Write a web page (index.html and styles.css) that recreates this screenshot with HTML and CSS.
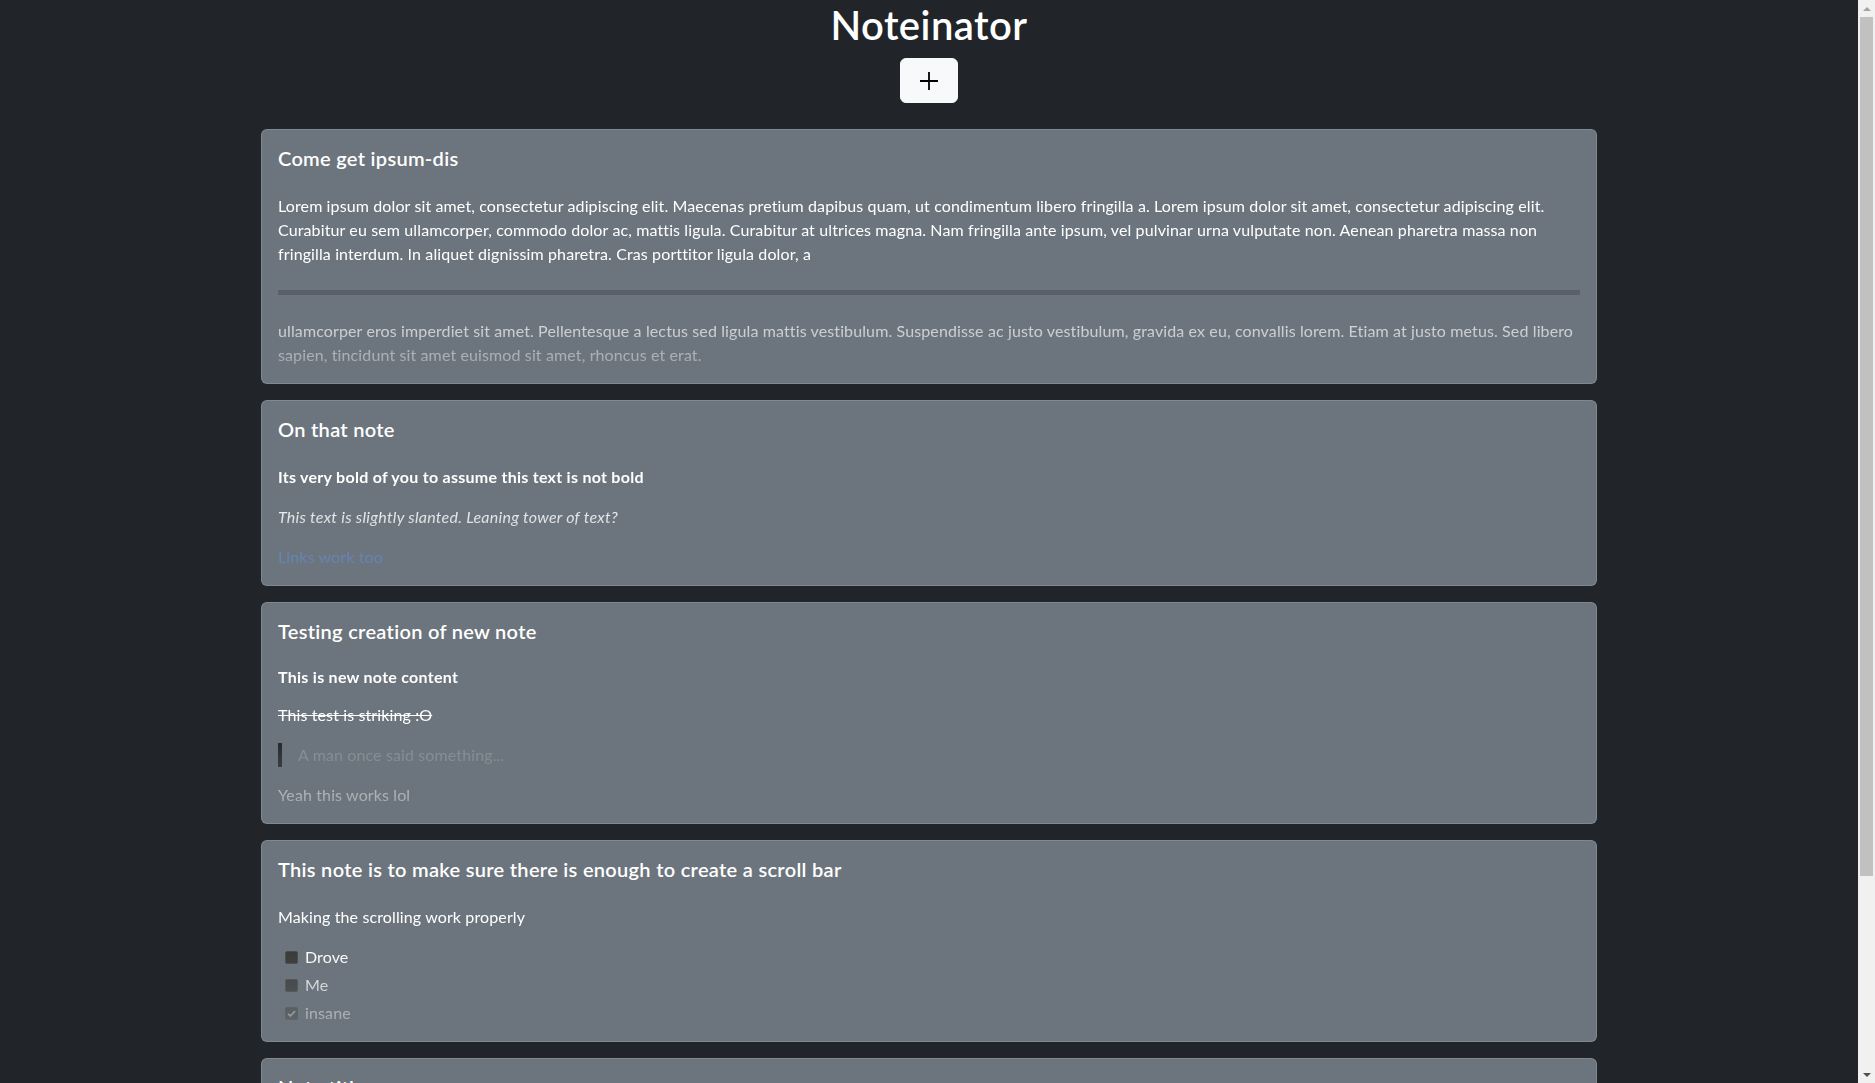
FILE: index.html
```html
<!DOCTYPE html>
<html lang="en">
<head>
<meta charset="utf-8">
<title>Noteinator</title>
<link rel="stylesheet" href="styles.css">
</head>
<body>
<div class="app">
  <div class="page">
    <header class="header">
      <h1 class="brand">Noteinator</h1>
      <button class="btn-add" type="button" aria-label="Add note">
        <svg width="20" height="20" viewBox="0 0 20 20" aria-hidden="true">
          <path d="M10 1v18M1 10h18" stroke="#000" stroke-width="1.8" fill="none"/>
        </svg>
      </button>
    </header>

    <main class="notes">
      <article class="note">
        <h5 class="note-title">Come get ipsum-dis</h5>
        <div class="note-body">
          <p>Lorem ipsum dolor sit amet, consectetur adipiscing elit. Maecenas pretium dapibus quam, ut condimentum libero fringilla a. Lorem ipsum dolor sit amet, consectetur adipiscing elit.<br>Curabitur eu sem ullamcorper, commodo dolor ac, mattis ligula. Curabitur at ultrices magna. Nam fringilla ante ipsum, vel pulvinar urna vulputate non. Aenean pharetra massa non<br>fringilla interdum. In aliquet dignissim pharetra. Cras porttitor ligula dolor, a</p>
          <hr class="rule">
          <p>ullamcorper eros imperdiet sit amet. Pellentesque a lectus sed ligula mattis vestibulum. Suspendisse ac justo vestibulum, gravida ex eu, convallis lorem. Etiam at justo metus. Sed libero<br>sapien, tincidunt sit amet euismod sit amet, rhoncus et erat.</p>
        </div>
      </article>

      <article class="note">
        <h5 class="note-title">On that note</h5>
        <div class="note-body">
          <p><strong>Its very bold of you to assume this text is not bold</strong></p>
          <p><em>This text is slightly slanted. Leaning tower of text?</em></p>
          <p><a class="link" href="#">Links work too</a></p>
        </div>
      </article>

      <article class="note note-compact">
        <h5 class="note-title">Testing creation of new note</h5>
        <div class="note-body">
          <p class="tight"><strong>This is new note content</strong></p>
          <p><del>This test is striking :O</del></p>
          <blockquote class="quote">A man once said something...</blockquote>
          <p>Yeah this works lol</p>
        </div>
      </article>

      <article class="note">
        <h5 class="note-title">This note is to make sure there is enough to create a scroll bar</h5>
        <div class="note-body">
          <p>Making the scrolling work properly</p>
          <ul class="tasks">
            <li class="task"><span class="cb"></span><span>Drove</span></li>
            <li class="task"><span class="cb"></span><span>Me</span></li>
            <li class="task"><span class="cb cb-checked"><svg width="11" height="11" viewBox="0 0 11 11" aria-hidden="true"><path d="M2 5.8l2.3 2.3L9 3" stroke="#d0d0d0" stroke-width="1.6" fill="none"/></svg></span><span>insane</span></li>
          </ul>
        </div>
      </article>

      <article class="note">
        <h5 class="note-title">Note title</h5>
        <div class="note-body">
          <p>Some more note content to fill up the page so that it scrolls.</p>
          <p>Another line of text in this note.</p>
          <p>And one more line to round it off.</p>
        </div>
      </article>
    </main>
  </div>

  <div class="scrollbar" aria-hidden="true">
    <div class="sb-btn"><span class="sb-arrow sb-up"></span></div>
    <div class="sb-track"><div class="sb-thumb"></div></div>
    <div class="sb-btn"><span class="sb-arrow sb-down"></span></div>
  </div>
</div>
</body>
</html>
```

FILE: styles.css
```css
html, body {
  margin: 0;
  padding: 0;
  height: 100%;
  overflow: hidden;
}

body {
  background: #212529;
  color: #fff;
  font-family: "Segoe UI", Lato, "Noto Sans", "Liberation Sans", sans-serif;
  font-size: 16px;
  line-height: 24px;
  letter-spacing: 0.12px;
}

.app {
  display: flex;
  height: 100vh;
}

.page {
  flex: 1;
  min-width: 0;
  overflow: hidden;
}

.header {
  display: flex;
  flex-direction: column;
  align-items: center;
  padding-top: 2px;
}

.brand {
  margin: 0;
  font-size: 40px;
  line-height: 46px;
  font-weight: 600;
  letter-spacing: 0.45px;
  color: #fff;
}

.btn-add {
  margin-top: 10px;
  width: 58px;
  height: 45px;
  padding: 0;
  display: flex;
  align-items: center;
  justify-content: center;
  background: #f8f9fa;
  border: 1px solid #f8f9fa;
  border-radius: 6px;
}

.notes {
  width: 1336px;
  margin: 26px auto 0;
  display: flex;
  flex-direction: column;
  gap: 16px;
  padding-bottom: 17px;
}

.note {
  background: #6c757d;
  border: 1px solid rgba(255, 255, 255, 0.15);
  border-radius: 6px;
  padding: 16px;
}

.note-title {
  margin: 0 0 24px;
  font-size: 20px;
  line-height: 24px;
  font-weight: 600;
  letter-spacing: 0.3px;
  color: #fff;
}

.note-compact .note-title {
  margin-bottom: 22px;
}

.note-body {
  -webkit-mask-image: linear-gradient(to bottom, #000 calc(100% - 72px), rgba(0, 0, 0, 0.32) 100%);
  mask-image: linear-gradient(to bottom, #000 calc(100% - 72px), rgba(0, 0, 0, 0.32) 100%);
}

.note-body p {
  margin: 0 0 16px;
}

.note-body p.tight {
  margin-bottom: 14px;
}

.note-body > :last-child {
  margin-bottom: 0;
}

.note-body strong {
  letter-spacing: 0.27px;
}

.note-body em {
  letter-spacing: 0.25px;
}

.rule {
  margin: 24px 0;
  height: 5px;
  border: 0;
  background: #596068;
}

.link {
  color: #5a9aff;
  text-decoration: none;
}

.quote {
  margin: 0 0 16px;
  padding-left: 16px;
  border-left: 4px solid #212529;
  color: #8c939a;
}

.tasks {
  list-style: none;
  margin: 0;
  padding: 0;
}

.task {
  display: flex;
  align-items: center;
  height: 24px;
  margin-bottom: 4px;
}

.task:last-child {
  margin-bottom: 0;
}

.cb {
  box-sizing: border-box;
  width: 13px;
  height: 13px;
  margin-left: 7px;
  margin-right: 7px;
  background: #3b3b3b;
  border: 1px solid #4c4c4c;
  border-radius: 2px;
  display: flex;
  align-items: center;
  justify-content: center;
}

.cb-checked {
  background: #474747;
}

.scrollbar {
  width: 17px;
  flex: none;
  display: flex;
  flex-direction: column;
  background: #f1f1f1;
}

.sb-btn {
  height: 17px;
  flex: none;
  display: flex;
  align-items: center;
  justify-content: center;
}

.sb-arrow {
  width: 0;
  height: 0;
  border-left: 4px solid transparent;
  border-right: 4px solid transparent;
}

.sb-up {
  border-bottom: 4px solid #a3a3a3;
}

.sb-down {
  border-top: 4px solid #505050;
}

.sb-track {
  flex: 1;
}

.sb-thumb {
  height: 859px;
  margin: 0 2px;
  background: #c1c1c1;
}
```
